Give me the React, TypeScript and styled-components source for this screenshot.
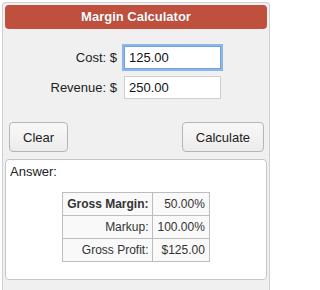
import styled, { createGlobalStyle } from 'styled-components';

const GlobalStyle = createGlobalStyle`
  body {
    margin: 0;
    background: #fff;
    font-family: 'Liberation Sans', Arial, sans-serif;
  }
`;

const results = [
  { label: 'Gross Margin:', value: '50.00%', strong: true },
  { label: 'Markup:', value: '100.00%', strong: false },
  { label: 'Gross Profit:', value: '$125.00', strong: false },
];

const App = () => {
  return (
    <>
      <GlobalStyle />
      <Panel>
        <Header>Margin Calculator</Header>
        <Form>
          <Label>Cost: $</Label>
          <Field $focused defaultValue="125.00" />
          <Label>Revenue: $</Label>
          <Field defaultValue="250.00" />
        </Form>
        <Actions>
          <Button>Clear</Button>
          <Button>Calculate</Button>
        </Actions>
        <AnswerBox>
          <AnswerTitle>Answer:</AnswerTitle>
          <ResultTable>
            <tbody>
              {results.map((row) => (
                <tr key={row.label}>
                  <Cell $strong={row.strong}>{row.label}</Cell>
                  <Cell>{row.value}</Cell>
                </tr>
              ))}
            </tbody>
          </ResultTable>
        </AnswerBox>
      </Panel>
    </>
  );
};

export default App;

const Panel = styled.div`
  margin: 2px 0 0 2px;
  width: 262px;
  height: 300px;
  padding: 2px;
  background: #f0f0f0;
  border: 1px solid #c9d2d6;
  border-radius: 3px;
`;

const Header = styled.div`
  height: 24px;
  line-height: 24px;
  background: #c0503e;
  border-radius: 4px;
  color: #fff;
  font-weight: bold;
  font-size: 13px;
  text-align: center;
  text-shadow: 0 0 1px rgba(0, 0, 0, 0.3);
`;

const Form = styled.div`
  display: grid;
  grid-template-columns: 112px 97px;
  column-gap: 7px;
  row-gap: 7px;
  align-items: center;
  margin-top: 17px;
`;

const Label = styled.label`
  text-align: right;
  font-size: 13px;
  color: #222;
`;

const Field = styled.input<{ $focused?: boolean }>`
  box-sizing: border-box;
  width: 97px;
  height: 23px;
  padding: 0 4px;
  font-family: 'Liberation Sans', Arial, sans-serif;
  font-size: 13px;
  color: #111;
  background: #fff;
  border: 1px solid ${(p) => (p.$focused ? '#6fa3e0' : '#cfcfcf')};
  outline: ${(p) => (p.$focused ? '2px solid #8ab6ea' : 'none')};
  outline-offset: 0;
`;

const Actions = styled.div`
  display: flex;
  justify-content: space-between;
  padding: 0 3px 0 4px;
  margin-top: 23px;
`;

const Button = styled.button`
  height: 30px;
  padding: 0 13px;
  font-family: 'Liberation Sans', Arial, sans-serif;
  font-size: 13px;
  color: #222;
  background: linear-gradient(#f8f8f8, #ececec);
  border: 1px solid #b5b5b5;
  border-radius: 4px;
`;

const AnswerBox = styled.div`
  margin-top: 7px;
  height: 121px;
  width: 262px;
  padding: 4px 4px;
  box-sizing: border-box;
  background: #fff;
  border: 1px solid #c6c6c6;
  border-radius: 4px;
`;

const AnswerTitle = styled.div`
  font-size: 13px;
  color: #222;
`;

const ResultTable = styled.table`
  margin: 13px auto 0;
  border-collapse: collapse;
  background: #f9f9f9;
`;

const Cell = styled.td<{ $strong?: boolean }>`
  height: 22px;
  padding: 0 4px;
  text-align: right;
  font-size: 12px;
  color: #333;
  font-weight: ${(p) => (p.$strong ? 'bold' : 'normal')};
  border: 1px solid #bdbdbd;
`;
